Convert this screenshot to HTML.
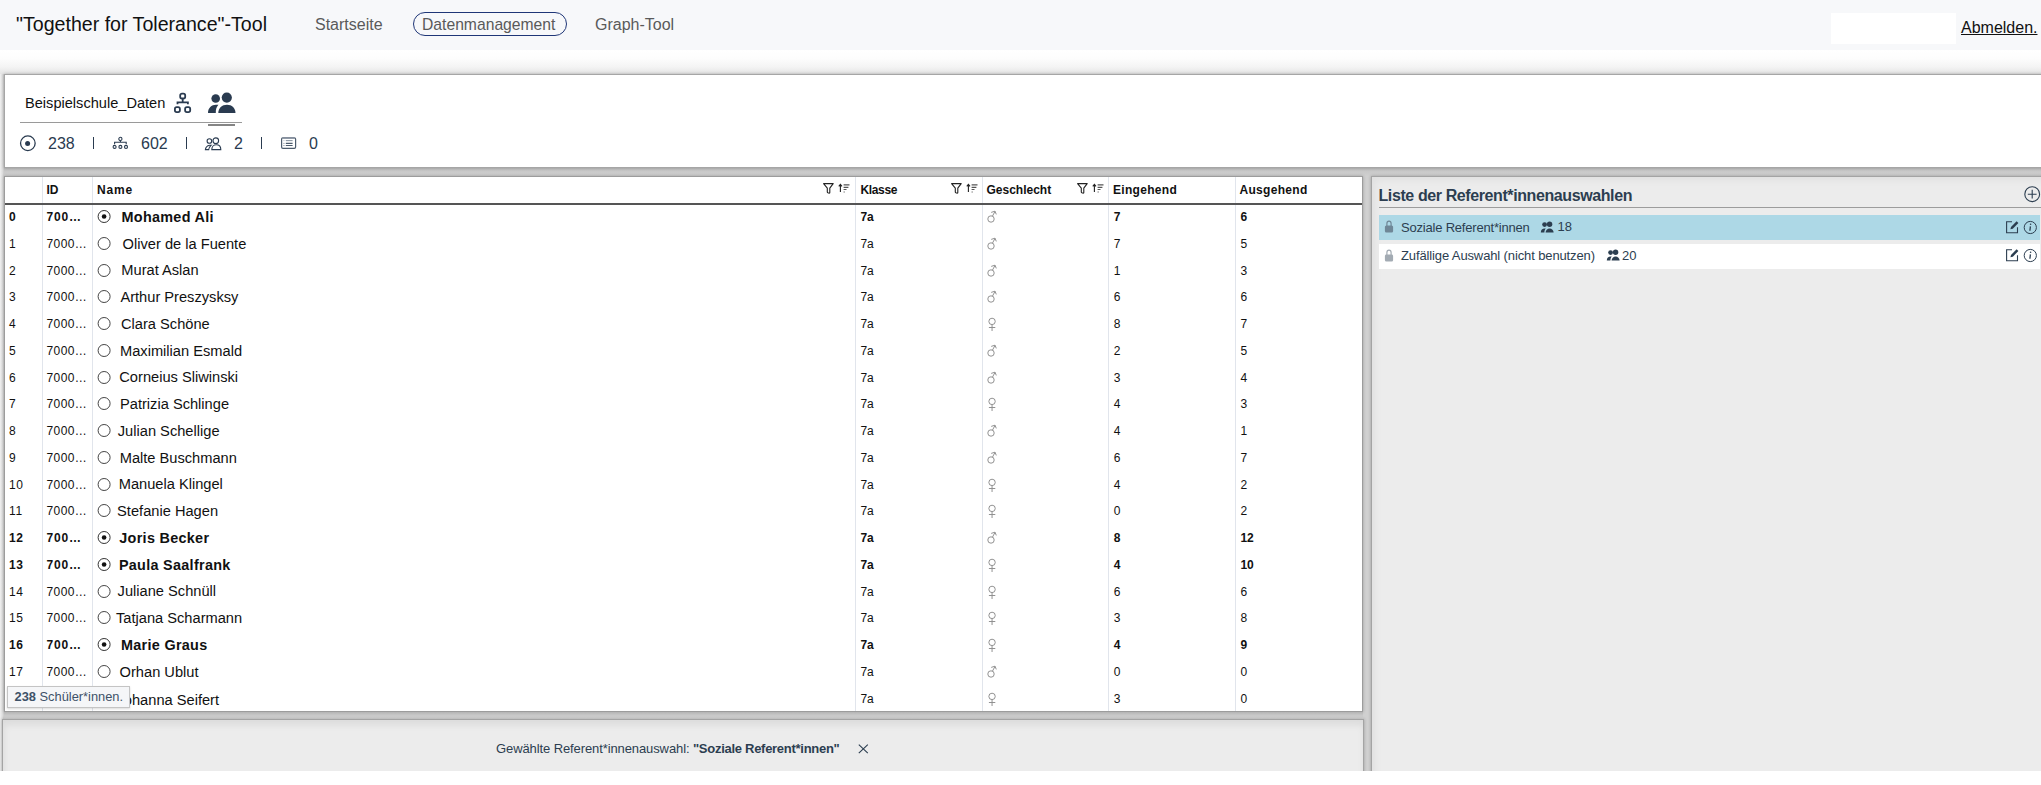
<!DOCTYPE html>
<html><head><meta charset="utf-8">
<style>
*{box-sizing:border-box;margin:0;padding:0}
html,body{width:2041px;height:785px;overflow:hidden;background:#fff;font-family:"Liberation Sans",sans-serif;}
.abs{position:absolute;white-space:nowrap}
#nav{position:absolute;left:0;top:0;width:2041px;height:50px;background:#f7f8fa}
#title{left:16px;top:12.5px;font-size:19.6px;color:#111;line-height:22px}
.nl{font-size:16px;color:#5a5a5a;line-height:18px;top:16px}
#pill{left:413px;top:12px;width:154px;height:24px;border:1.5px solid #1f3677;border-radius:12px}
#wbox{left:1831px;top:13px;width:125px;height:31px;background:#fff}
#abm{left:1961px;top:18.5px;font-size:16px;color:#111;text-decoration:underline;text-underline-offset:1.4px;line-height:18px}
#info{position:absolute;left:4px;top:74px;width:2060px;height:94px;background:#fff;border:1px solid #a6a6a6;box-shadow:0 0 3px rgba(0,0,0,0.25)}
#gray{position:absolute;left:0;top:167px;width:2041px;height:604px;background:linear-gradient(#bababa 0px,#c8c8c8 4px,#d0d0d0 9px,#d0d0d0 100%)}
#lstrip{position:absolute;left:0;top:74px;width:4px;height:697px;background:linear-gradient(90deg,#f0f0f0,#dadada 70%,#c8c8c8)}
#topgrad{position:absolute;left:0;top:50px;width:2041px;height:24px;background:linear-gradient(#fff 0%,#fdfdfd 35%,#f4f4f4 70%,#e4e4e4 100%)}
#table{position:absolute;left:4px;top:176px;width:1359px;height:536px;background:#fff;border:1px solid #9c9c9c;overflow:hidden;box-shadow:0 0 3px rgba(0,0,0,0.25)}
#bottom{position:absolute;left:2px;top:719px;width:1362px;height:60px;background:#ececec;border:1px solid #a4a4a4;box-shadow:0 0 3px rgba(0,0,0,0.25), inset 1px 5px 7px rgba(0,0,0,0.07)}
#right{position:absolute;left:1371px;top:176px;width:690px;height:610px;background:#ececec;border:1px solid #a4a4a4;box-shadow:0 0 3px rgba(0,0,0,0.25), inset 3px 3px 8px rgba(0,0,0,0.05)}
.st{top:135px;font-size:16px;color:#2a3b50;line-height:17px}
.stb{top:137.4px;width:1.6px;height:12px;background:#2a3b50}
#table div,#table svg{position:absolute;white-space:nowrap}
.cd{top:0;width:1px;height:535px;background:#e1e5ec}
.hb{left:0;top:26px;width:1358px;height:2px;background:#555}
.ht{top:6px;font-size:12px;font-weight:bold;color:#111;line-height:14px}
.ic{top:5px}
.tc{font-size:12px;color:#111;line-height:16px}
.idc{letter-spacing:0.4px}
.idc.b{letter-spacing:0.85px}
.b{font-weight:bold}
.nm.b{letter-spacing:0.3px;font-size:14.4px}
.nm{font-size:14.65px;color:#111;line-height:17px}
#rtitle{left:1378.5px;top:187px;font-size:16px;font-weight:bold;color:#2c3e50;letter-spacing:-0.4px;line-height:18px}
.rt{font-size:13px;color:#2c3e50;line-height:15px}
#tip{left:7px;top:686px;width:123px;height:22px;background:#f5f6f8;border:1px solid #c4c4c4;box-shadow:0 1px 2px rgba(0,0,0,0.15);font-size:12.85px;color:#3e5268;line-height:20px;padding-left:6.5px}
#white{position:absolute;left:0;top:771px;width:2041px;height:14px;background:#fff}
</style></head><body>
<div id="nav">
  <div class="abs" id="title">"Together for Tolerance"-Tool</div>
  <div class="abs nl" style="left:315px">Startseite</div>
  <div class="abs" id="pill"></div>
  <div class="abs nl" style="left:422px;font-size:15.7px">Datenmanagement</div>
  <div class="abs nl" style="left:595px">Graph-Tool</div>
  <div class="abs" id="wbox"></div>
  <div class="abs" id="abm">Abmelden.</div>
</div>
<div id="gray"></div><div id="topgrad"></div><div id="lstrip"></div><div id="info"></div>
<div class="abs" id="bsd" style="left:25px;top:95px;font-size:14.6px;color:#111;line-height:17px">Beispielschule_Daten</div>
<svg class="abs" style="left:172px;top:91px" width="22" height="24" viewBox="0 0 22 24">
 <g fill="none" stroke="#2a3b50" stroke-width="1.8">
  <rect x="8.2" y="2.6" width="5" height="4.9" rx="1.8"/>
  <path d="M10.7 7.5v3.7 M5.5 13.2v-1.8h10.4v1.8"/>
  <rect x="2.9" y="16.1" width="5" height="5" rx="1.8"/>
  <rect x="13.1" y="16.1" width="5.1" height="5" rx="1.8"/>
 </g>
</svg>
<svg class="abs" style="left:206px;top:90px" width="32" height="25" viewBox="0 0 32 25">
 <g fill="#2a3b50">
  <circle cx="9.7" cy="8.5" r="4.3"/>
  <circle cx="20.8" cy="7.6" r="5.1"/>
  <path d="M2 23 C2 18 5.5 14.8 10 14.8 L12.4 14.8 C10.6 16.8 9.6 19.6 9.8 23 Z"/>
  <path d="M12.3 23 C12.3 18.2 16 14.8 21 14.8 C25.8 14.8 29.5 18.2 29.5 23 Z"/>
 </g>
</svg>
<div class="abs" style="left:20px;top:122px;width:222px;height:1px;background:#9a9a9a"></div>
<div class="abs" style="left:208px;top:124px;width:27px;height:2px;background:#858585"></div>
<svg class="abs" style="left:19px;top:134px" width="18" height="18" viewBox="0 0 18 18">
 <circle cx="8.85" cy="9.25" r="7.3" fill="none" stroke="#2a3b50" stroke-width="1.3"/>
 <circle cx="8.6" cy="9.5" r="2.5" fill="#2a3b50"/>
</svg>
<div class="abs st" style="left:48px">238</div>
<div class="abs stb" style="left:92.6px"></div>
<svg class="abs" style="left:112px;top:136px" width="17" height="14" viewBox="0 0 17 14">
 <g fill="none" stroke="#2a3b50" stroke-width="1.1">
  <circle cx="8.4" cy="2.9" r="1.6"/>
  <path d="M8.4 4.5v1.6 M2.6 8.3V6.3h11.6v2"/>
  <circle cx="2.6" cy="10.9" r="1.5"/>
  <circle cx="8.4" cy="10.9" r="1.5"/>
  <circle cx="14" cy="10.9" r="1.5"/>
 </g>
</svg>
<div class="abs st" style="left:141px">602</div>
<div class="abs stb" style="left:185.6px"></div>
<svg class="abs" style="left:204px;top:136.5px" width="18" height="14" viewBox="0 0 18 14">
 <g fill="none" stroke="#2a3b50" stroke-width="1.1">
  <circle cx="5.4" cy="4" r="2.3"/>
  <circle cx="11.8" cy="3.7" r="2.8"/>
  <path d="M1.4 12.6C1.6 10.6 3 8.7 5.6 8.2H7.2C6 9.4 5 10.9 4.7 12.6Z"/>
  <path d="M7.8 12.6C7.8 9.7 9.7 7.8 12.3 7.8S16.8 9.7 16.8 12.6Z"/>
 </g>
</svg>
<div class="abs st" style="left:234px">2</div>
<div class="abs stb" style="left:260.8px"></div>
<svg class="abs" style="left:280px;top:136px" width="18" height="14" viewBox="0 0 18 14">
 <rect x="1.6" y="1.8" width="14" height="10.6" rx="1.3" fill="none" stroke="#4d5c6d" stroke-width="1.2"/>
 <path d="M2.2 2.1h12.8" stroke="#8d97a4" stroke-width="1.5"/>
 <path d="M5.8 4.6h6.8" stroke="#8d97a4" stroke-width="1.1"/>
 <path d="M5.8 7.4h6.8 M5.8 9.5h6.8" stroke="#4d5c6d" stroke-width="1.1"/>
 <path d="M3.5 4.6h.9" stroke="#b0b8c2" stroke-width="1"/>
 <path d="M3.5 7.4h.9 M3.5 9.5h.9" stroke="#6d7a88" stroke-width="1"/>
</svg>
<div class="abs st" style="left:309px">0</div>

<div id="table">
<div class="cd" style="left:37.0px"></div>
<div class="cd" style="left:87.0px"></div>
<div class="cd" style="left:850.0px"></div>
<div class="cd" style="left:977.0px"></div>
<div class="cd" style="left:1103.0px"></div>
<div class="cd" style="left:1230.0px"></div>
<div class="hb"></div>
<div class="ht" style="left:41.5px;letter-spacing:0px">ID</div>
<div class="ht" style="left:92.0px;letter-spacing:0.8px">Name</div>
<div class="ht" style="left:855.5px;letter-spacing:-0.35px">Klasse</div>
<div class="ht" style="left:981.5px;letter-spacing:0px">Geschlecht</div>
<div class="ht" style="left:1108.0px;letter-spacing:0.3px">Eingehend</div>
<div class="ht" style="left:1234.5px;letter-spacing:0.3px">Ausgehend</div>
<svg class="ic" style="left:817.3px" width="29" height="14" viewBox="0 0 29 14"><path d="M1.6 1.6H11.2L7.8 6.2V10.4C7.8 11 7.2 11.3 6.7 11.1L5.9 10.8C5.5 10.6 5.3 10.3 5.3 9.9V6.2Z" fill="none" stroke="#222" stroke-width="1.1" stroke-linejoin="round"/><path d="M18.4 10V2.6 M16.8 4.4l1.6-2 1.6 2" fill="none" stroke="#222" stroke-width="1.1"/><path d="M21.6 2.9h5.9 M21.6 5.4h4.8 M21.6 7.5h2.9 M21.6 10h1.1" stroke="#555" stroke-width="1.1"/></svg>
<svg class="ic" style="left:944.6px" width="29" height="14" viewBox="0 0 29 14"><path d="M1.6 1.6H11.2L7.8 6.2V10.4C7.8 11 7.2 11.3 6.7 11.1L5.9 10.8C5.5 10.6 5.3 10.3 5.3 9.9V6.2Z" fill="none" stroke="#222" stroke-width="1.1" stroke-linejoin="round"/><path d="M18.4 10V2.6 M16.8 4.4l1.6-2 1.6 2" fill="none" stroke="#222" stroke-width="1.1"/><path d="M21.6 2.9h5.9 M21.6 5.4h4.8 M21.6 7.5h2.9 M21.6 10h1.1" stroke="#555" stroke-width="1.1"/></svg>
<svg class="ic" style="left:1071.0px" width="29" height="14" viewBox="0 0 29 14"><path d="M1.6 1.6H11.2L7.8 6.2V10.4C7.8 11 7.2 11.3 6.7 11.1L5.9 10.8C5.5 10.6 5.3 10.3 5.3 9.9V6.2Z" fill="none" stroke="#222" stroke-width="1.1" stroke-linejoin="round"/><path d="M18.4 10V2.6 M16.8 4.4l1.6-2 1.6 2" fill="none" stroke="#222" stroke-width="1.1"/><path d="M21.6 2.9h5.9 M21.6 5.4h4.8 M21.6 7.5h2.9 M21.6 10h1.1" stroke="#555" stroke-width="1.1"/></svg>
<div class="tc b" style="left:4.1px;top:32.00px;letter-spacing:0.5px">0</div>
<div class="tc b idc" style="left:41.5px;top:32.00px">700…</div>
<svg class="rd" style="left:91.5px;top:32.00px" width="15" height="15" viewBox="0 0 15 15"><circle cx="7.1" cy="7.5" r="6" fill="none" stroke="#333" stroke-width="1"/><circle cx="7.1" cy="7.5" r="2.3" fill="#111"/></svg>
<div class="nm b" style="left:116.5px;top:31.80px">Mohamed Ali</div>
<div class="tc b" style="left:855.4px;top:32.00px">7a</div>
<svg class="gs" style="left:980.5px;top:33.00px" width="13" height="15" viewBox="0 0 13 15"><circle cx="5" cy="9" r="3.2" fill="none" stroke="#8c8c8c" stroke-width="0.95"/><path d="M6.4 6.2 9 1.5 M5.2 2.4 9 1.2 10.3 4.4" fill="none" stroke="#8c8c8c" stroke-width="0.95"/></svg>
<div class="tc b" style="left:1108.8px;top:32.00px">7</div>
<div class="tc b" style="left:1235.4px;top:32.00px">6</div>
<div class="tc" style="left:4.1px;top:58.75px;letter-spacing:0.5px">1</div>
<div class="tc idc" style="left:41.5px;top:58.75px">7000…</div>
<svg class="rd" style="left:91.5px;top:58.75px" width="15" height="15" viewBox="0 0 15 15"><circle cx="7.1" cy="7.5" r="6" fill="none" stroke="#444" stroke-width="1"/></svg>
<div class="nm" style="left:117.6px;top:58.55px">Oliver de la Fuente</div>
<div class="tc" style="left:855.4px;top:58.75px">7a</div>
<svg class="gs" style="left:980.5px;top:59.75px" width="13" height="15" viewBox="0 0 13 15"><circle cx="5" cy="9" r="3.2" fill="none" stroke="#8c8c8c" stroke-width="0.95"/><path d="M6.4 6.2 9 1.5 M5.2 2.4 9 1.2 10.3 4.4" fill="none" stroke="#8c8c8c" stroke-width="0.95"/></svg>
<div class="tc" style="left:1108.8px;top:58.75px">7</div>
<div class="tc" style="left:1235.4px;top:58.75px">5</div>
<div class="tc" style="left:4.1px;top:85.50px;letter-spacing:0.5px">2</div>
<div class="tc idc" style="left:41.5px;top:85.50px">7000…</div>
<svg class="rd" style="left:91.5px;top:85.50px" width="15" height="15" viewBox="0 0 15 15"><circle cx="7.1" cy="7.5" r="6" fill="none" stroke="#444" stroke-width="1"/></svg>
<div class="nm" style="left:116.3px;top:85.30px">Murat Aslan</div>
<div class="tc" style="left:855.4px;top:85.50px">7a</div>
<svg class="gs" style="left:980.5px;top:86.50px" width="13" height="15" viewBox="0 0 13 15"><circle cx="5" cy="9" r="3.2" fill="none" stroke="#8c8c8c" stroke-width="0.95"/><path d="M6.4 6.2 9 1.5 M5.2 2.4 9 1.2 10.3 4.4" fill="none" stroke="#8c8c8c" stroke-width="0.95"/></svg>
<div class="tc" style="left:1108.8px;top:85.50px">1</div>
<div class="tc" style="left:1235.4px;top:85.50px">3</div>
<div class="tc" style="left:4.1px;top:112.25px;letter-spacing:0.5px">3</div>
<div class="tc idc" style="left:41.5px;top:112.25px">7000…</div>
<svg class="rd" style="left:91.5px;top:112.25px" width="15" height="15" viewBox="0 0 15 15"><circle cx="7.1" cy="7.5" r="6" fill="none" stroke="#444" stroke-width="1"/></svg>
<div class="nm" style="left:115.4px;top:112.05px">Arthur Preszysksy</div>
<div class="tc" style="left:855.4px;top:112.25px">7a</div>
<svg class="gs" style="left:980.5px;top:113.25px" width="13" height="15" viewBox="0 0 13 15"><circle cx="5" cy="9" r="3.2" fill="none" stroke="#8c8c8c" stroke-width="0.95"/><path d="M6.4 6.2 9 1.5 M5.2 2.4 9 1.2 10.3 4.4" fill="none" stroke="#8c8c8c" stroke-width="0.95"/></svg>
<div class="tc" style="left:1108.8px;top:112.25px">6</div>
<div class="tc" style="left:1235.4px;top:112.25px">6</div>
<div class="tc" style="left:4.1px;top:139.00px;letter-spacing:0.5px">4</div>
<div class="tc idc" style="left:41.5px;top:139.00px">7000…</div>
<svg class="rd" style="left:91.5px;top:139.00px" width="15" height="15" viewBox="0 0 15 15"><circle cx="7.1" cy="7.5" r="6" fill="none" stroke="#444" stroke-width="1"/></svg>
<div class="nm" style="left:116.0px;top:138.80px">Clara Schöne</div>
<div class="tc" style="left:855.4px;top:139.00px">7a</div>
<svg class="gs" style="left:980.5px;top:140.00px" width="13" height="15" viewBox="0 0 13 15"><circle cx="6.05" cy="4.4" r="3.2" fill="none" stroke="#8c8c8c" stroke-width="0.95"/><path d="M6.05 7.6v6.4 M2.9 10.5h6.4" fill="none" stroke="#8c8c8c" stroke-width="0.95"/></svg>
<div class="tc" style="left:1108.8px;top:139.00px">8</div>
<div class="tc" style="left:1235.4px;top:139.00px">7</div>
<div class="tc" style="left:4.1px;top:165.75px;letter-spacing:0.5px">5</div>
<div class="tc idc" style="left:41.5px;top:165.75px">7000…</div>
<svg class="rd" style="left:91.5px;top:165.75px" width="15" height="15" viewBox="0 0 15 15"><circle cx="7.1" cy="7.5" r="6" fill="none" stroke="#444" stroke-width="1"/></svg>
<div class="nm" style="left:115.0px;top:165.55px">Maximilian Esmald</div>
<div class="tc" style="left:855.4px;top:165.75px">7a</div>
<svg class="gs" style="left:980.5px;top:166.75px" width="13" height="15" viewBox="0 0 13 15"><circle cx="5" cy="9" r="3.2" fill="none" stroke="#8c8c8c" stroke-width="0.95"/><path d="M6.4 6.2 9 1.5 M5.2 2.4 9 1.2 10.3 4.4" fill="none" stroke="#8c8c8c" stroke-width="0.95"/></svg>
<div class="tc" style="left:1108.8px;top:165.75px">2</div>
<div class="tc" style="left:1235.4px;top:165.75px">5</div>
<div class="tc" style="left:4.1px;top:192.50px;letter-spacing:0.5px">6</div>
<div class="tc idc" style="left:41.5px;top:192.50px">7000…</div>
<svg class="rd" style="left:91.5px;top:192.50px" width="15" height="15" viewBox="0 0 15 15"><circle cx="7.1" cy="7.5" r="6" fill="none" stroke="#444" stroke-width="1"/></svg>
<div class="nm" style="left:114.3px;top:192.30px">Corneius Sliwinski</div>
<div class="tc" style="left:855.4px;top:192.50px">7a</div>
<svg class="gs" style="left:980.5px;top:193.50px" width="13" height="15" viewBox="0 0 13 15"><circle cx="5" cy="9" r="3.2" fill="none" stroke="#8c8c8c" stroke-width="0.95"/><path d="M6.4 6.2 9 1.5 M5.2 2.4 9 1.2 10.3 4.4" fill="none" stroke="#8c8c8c" stroke-width="0.95"/></svg>
<div class="tc" style="left:1108.8px;top:192.50px">3</div>
<div class="tc" style="left:1235.4px;top:192.50px">4</div>
<div class="tc" style="left:4.1px;top:219.25px;letter-spacing:0.5px">7</div>
<div class="tc idc" style="left:41.5px;top:219.25px">7000…</div>
<svg class="rd" style="left:91.5px;top:219.25px" width="15" height="15" viewBox="0 0 15 15"><circle cx="7.1" cy="7.5" r="6" fill="none" stroke="#444" stroke-width="1"/></svg>
<div class="nm" style="left:115.0px;top:219.05px">Patrizia Schlinge</div>
<div class="tc" style="left:855.4px;top:219.25px">7a</div>
<svg class="gs" style="left:980.5px;top:220.25px" width="13" height="15" viewBox="0 0 13 15"><circle cx="6.05" cy="4.4" r="3.2" fill="none" stroke="#8c8c8c" stroke-width="0.95"/><path d="M6.05 7.6v6.4 M2.9 10.5h6.4" fill="none" stroke="#8c8c8c" stroke-width="0.95"/></svg>
<div class="tc" style="left:1108.8px;top:219.25px">4</div>
<div class="tc" style="left:1235.4px;top:219.25px">3</div>
<div class="tc" style="left:4.1px;top:246.00px;letter-spacing:0.5px">8</div>
<div class="tc idc" style="left:41.5px;top:246.00px">7000…</div>
<svg class="rd" style="left:91.5px;top:246.00px" width="15" height="15" viewBox="0 0 15 15"><circle cx="7.1" cy="7.5" r="6" fill="none" stroke="#444" stroke-width="1"/></svg>
<div class="nm" style="left:112.8px;top:245.80px">Julian Schellige</div>
<div class="tc" style="left:855.4px;top:246.00px">7a</div>
<svg class="gs" style="left:980.5px;top:247.00px" width="13" height="15" viewBox="0 0 13 15"><circle cx="5" cy="9" r="3.2" fill="none" stroke="#8c8c8c" stroke-width="0.95"/><path d="M6.4 6.2 9 1.5 M5.2 2.4 9 1.2 10.3 4.4" fill="none" stroke="#8c8c8c" stroke-width="0.95"/></svg>
<div class="tc" style="left:1108.8px;top:246.00px">4</div>
<div class="tc" style="left:1235.4px;top:246.00px">1</div>
<div class="tc" style="left:4.1px;top:272.75px;letter-spacing:0.5px">9</div>
<div class="tc idc" style="left:41.5px;top:272.75px">7000…</div>
<svg class="rd" style="left:91.5px;top:272.75px" width="15" height="15" viewBox="0 0 15 15"><circle cx="7.1" cy="7.5" r="6" fill="none" stroke="#444" stroke-width="1"/></svg>
<div class="nm" style="left:114.7px;top:272.55px">Malte Buschmann</div>
<div class="tc" style="left:855.4px;top:272.75px">7a</div>
<svg class="gs" style="left:980.5px;top:273.75px" width="13" height="15" viewBox="0 0 13 15"><circle cx="5" cy="9" r="3.2" fill="none" stroke="#8c8c8c" stroke-width="0.95"/><path d="M6.4 6.2 9 1.5 M5.2 2.4 9 1.2 10.3 4.4" fill="none" stroke="#8c8c8c" stroke-width="0.95"/></svg>
<div class="tc" style="left:1108.8px;top:272.75px">6</div>
<div class="tc" style="left:1235.4px;top:272.75px">7</div>
<div class="tc" style="left:4.1px;top:299.50px;letter-spacing:0.5px">10</div>
<div class="tc idc" style="left:41.5px;top:299.50px">7000…</div>
<svg class="rd" style="left:91.5px;top:299.50px" width="15" height="15" viewBox="0 0 15 15"><circle cx="7.1" cy="7.5" r="6" fill="none" stroke="#444" stroke-width="1"/></svg>
<div class="nm" style="left:113.7px;top:299.30px">Manuela Klingel</div>
<div class="tc" style="left:855.4px;top:299.50px">7a</div>
<svg class="gs" style="left:980.5px;top:300.50px" width="13" height="15" viewBox="0 0 13 15"><circle cx="6.05" cy="4.4" r="3.2" fill="none" stroke="#8c8c8c" stroke-width="0.95"/><path d="M6.05 7.6v6.4 M2.9 10.5h6.4" fill="none" stroke="#8c8c8c" stroke-width="0.95"/></svg>
<div class="tc" style="left:1108.8px;top:299.50px">4</div>
<div class="tc" style="left:1235.4px;top:299.50px">2</div>
<div class="tc" style="left:4.1px;top:326.25px;letter-spacing:0.5px">11</div>
<div class="tc idc" style="left:41.5px;top:326.25px">7000…</div>
<svg class="rd" style="left:91.5px;top:326.25px" width="15" height="15" viewBox="0 0 15 15"><circle cx="7.1" cy="7.5" r="6" fill="none" stroke="#444" stroke-width="1"/></svg>
<div class="nm" style="left:112.1px;top:326.05px">Stefanie Hagen</div>
<div class="tc" style="left:855.4px;top:326.25px">7a</div>
<svg class="gs" style="left:980.5px;top:327.25px" width="13" height="15" viewBox="0 0 13 15"><circle cx="6.05" cy="4.4" r="3.2" fill="none" stroke="#8c8c8c" stroke-width="0.95"/><path d="M6.05 7.6v6.4 M2.9 10.5h6.4" fill="none" stroke="#8c8c8c" stroke-width="0.95"/></svg>
<div class="tc" style="left:1108.8px;top:326.25px">0</div>
<div class="tc" style="left:1235.4px;top:326.25px">2</div>
<div class="tc b" style="left:4.1px;top:353.00px;letter-spacing:0.5px">12</div>
<div class="tc b idc" style="left:41.5px;top:353.00px">700…</div>
<svg class="rd" style="left:91.5px;top:353.00px" width="15" height="15" viewBox="0 0 15 15"><circle cx="7.1" cy="7.5" r="6" fill="none" stroke="#333" stroke-width="1"/><circle cx="7.1" cy="7.5" r="2.3" fill="#111"/></svg>
<div class="nm b" style="left:114.3px;top:352.80px">Joris Becker</div>
<div class="tc b" style="left:855.4px;top:353.00px">7a</div>
<svg class="gs" style="left:980.5px;top:354.00px" width="13" height="15" viewBox="0 0 13 15"><circle cx="5" cy="9" r="3.2" fill="none" stroke="#8c8c8c" stroke-width="0.95"/><path d="M6.4 6.2 9 1.5 M5.2 2.4 9 1.2 10.3 4.4" fill="none" stroke="#8c8c8c" stroke-width="0.95"/></svg>
<div class="tc b" style="left:1108.8px;top:353.00px">8</div>
<div class="tc b" style="left:1235.4px;top:353.00px">12</div>
<div class="tc b" style="left:4.1px;top:379.75px;letter-spacing:0.5px">13</div>
<div class="tc b idc" style="left:41.5px;top:379.75px">700…</div>
<svg class="rd" style="left:91.5px;top:379.75px" width="15" height="15" viewBox="0 0 15 15"><circle cx="7.1" cy="7.5" r="6" fill="none" stroke="#333" stroke-width="1"/><circle cx="7.1" cy="7.5" r="2.3" fill="#111"/></svg>
<div class="nm b" style="left:113.9px;top:379.55px">Paula Saalfrank</div>
<div class="tc b" style="left:855.4px;top:379.75px">7a</div>
<svg class="gs" style="left:980.5px;top:380.75px" width="13" height="15" viewBox="0 0 13 15"><circle cx="6.05" cy="4.4" r="3.2" fill="none" stroke="#8c8c8c" stroke-width="0.95"/><path d="M6.05 7.6v6.4 M2.9 10.5h6.4" fill="none" stroke="#8c8c8c" stroke-width="0.95"/></svg>
<div class="tc b" style="left:1108.8px;top:379.75px">4</div>
<div class="tc b" style="left:1235.4px;top:379.75px">10</div>
<div class="tc" style="left:4.1px;top:406.50px;letter-spacing:0.5px">14</div>
<div class="tc idc" style="left:41.5px;top:406.50px">7000…</div>
<svg class="rd" style="left:91.5px;top:406.50px" width="15" height="15" viewBox="0 0 15 15"><circle cx="7.1" cy="7.5" r="6" fill="none" stroke="#444" stroke-width="1"/></svg>
<div class="nm" style="left:112.6px;top:406.30px">Juliane Schnüll</div>
<div class="tc" style="left:855.4px;top:406.50px">7a</div>
<svg class="gs" style="left:980.5px;top:407.50px" width="13" height="15" viewBox="0 0 13 15"><circle cx="6.05" cy="4.4" r="3.2" fill="none" stroke="#8c8c8c" stroke-width="0.95"/><path d="M6.05 7.6v6.4 M2.9 10.5h6.4" fill="none" stroke="#8c8c8c" stroke-width="0.95"/></svg>
<div class="tc" style="left:1108.8px;top:406.50px">6</div>
<div class="tc" style="left:1235.4px;top:406.50px">6</div>
<div class="tc" style="left:4.1px;top:433.25px;letter-spacing:0.5px">15</div>
<div class="tc idc" style="left:41.5px;top:433.25px">7000…</div>
<svg class="rd" style="left:91.5px;top:433.25px" width="15" height="15" viewBox="0 0 15 15"><circle cx="7.1" cy="7.5" r="6" fill="none" stroke="#444" stroke-width="1"/></svg>
<div class="nm" style="left:111.0px;top:433.05px">Tatjana Scharmann</div>
<div class="tc" style="left:855.4px;top:433.25px">7a</div>
<svg class="gs" style="left:980.5px;top:434.25px" width="13" height="15" viewBox="0 0 13 15"><circle cx="6.05" cy="4.4" r="3.2" fill="none" stroke="#8c8c8c" stroke-width="0.95"/><path d="M6.05 7.6v6.4 M2.9 10.5h6.4" fill="none" stroke="#8c8c8c" stroke-width="0.95"/></svg>
<div class="tc" style="left:1108.8px;top:433.25px">3</div>
<div class="tc" style="left:1235.4px;top:433.25px">8</div>
<div class="tc b" style="left:4.1px;top:460.00px;letter-spacing:0.5px">16</div>
<div class="tc b idc" style="left:41.5px;top:460.00px">700…</div>
<svg class="rd" style="left:91.5px;top:460.00px" width="15" height="15" viewBox="0 0 15 15"><circle cx="7.1" cy="7.5" r="6" fill="none" stroke="#333" stroke-width="1"/><circle cx="7.1" cy="7.5" r="2.3" fill="#111"/></svg>
<div class="nm b" style="left:116.0px;top:459.80px">Marie Graus</div>
<div class="tc b" style="left:855.4px;top:460.00px">7a</div>
<svg class="gs" style="left:980.5px;top:461.00px" width="13" height="15" viewBox="0 0 13 15"><circle cx="6.05" cy="4.4" r="3.2" fill="none" stroke="#8c8c8c" stroke-width="0.95"/><path d="M6.05 7.6v6.4 M2.9 10.5h6.4" fill="none" stroke="#8c8c8c" stroke-width="0.95"/></svg>
<div class="tc b" style="left:1108.8px;top:460.00px">4</div>
<div class="tc b" style="left:1235.4px;top:460.00px">9</div>
<div class="tc" style="left:4.1px;top:486.75px;letter-spacing:0.5px">17</div>
<div class="tc idc" style="left:41.5px;top:486.75px">7000…</div>
<svg class="rd" style="left:91.5px;top:486.75px" width="15" height="15" viewBox="0 0 15 15"><circle cx="7.1" cy="7.5" r="6" fill="none" stroke="#444" stroke-width="1"/></svg>
<div class="nm" style="left:114.6px;top:486.55px">Orhan Ublut</div>
<div class="tc" style="left:855.4px;top:486.75px">7a</div>
<svg class="gs" style="left:980.5px;top:487.75px" width="13" height="15" viewBox="0 0 13 15"><circle cx="5" cy="9" r="3.2" fill="none" stroke="#8c8c8c" stroke-width="0.95"/><path d="M6.4 6.2 9 1.5 M5.2 2.4 9 1.2 10.3 4.4" fill="none" stroke="#8c8c8c" stroke-width="0.95"/></svg>
<div class="tc" style="left:1108.8px;top:486.75px">0</div>
<div class="tc" style="left:1235.4px;top:486.75px">0</div>
<div class="tc" style="left:4.1px;top:513.50px;letter-spacing:0.5px">18</div>
<div class="tc idc" style="left:41.5px;top:513.50px">7000…</div>
<svg class="rd" style="left:91.5px;top:513.50px" width="15" height="15" viewBox="0 0 15 15"><circle cx="7.1" cy="7.5" r="6" fill="none" stroke="#444" stroke-width="1"/></svg>
<div class="nm" style="left:111.5px;top:515.30px">Johanna Seifert</div>
<div class="tc" style="left:855.4px;top:513.50px">7a</div>
<svg class="gs" style="left:980.5px;top:514.50px" width="13" height="15" viewBox="0 0 13 15"><circle cx="6.05" cy="4.4" r="3.2" fill="none" stroke="#8c8c8c" stroke-width="0.95"/><path d="M6.05 7.6v6.4 M2.9 10.5h6.4" fill="none" stroke="#8c8c8c" stroke-width="0.95"/></svg>
<div class="tc" style="left:1108.8px;top:513.50px">3</div>
<div class="tc" style="left:1235.4px;top:513.50px">0</div>
</div><!--/table-->
<div class="abs" style="left:4px;top:712px;width:1359px;height:7px;background:linear-gradient(#b4b4b4,#c6c6c6 40%,#d6d6d6)"></div>
<div id="bottom"></div>
<div class="abs" style="left:496px;top:741px;font-size:13px;color:#2c3e50;line-height:15px;letter-spacing:-0.1px">Gewählte Referent*innenauswahl: <b style="letter-spacing:-0.28px">"Soziale Referent*innen"</b></div>
<svg class="abs" style="left:857px;top:743px" width="13" height="12" viewBox="0 0 13 12"><path d="M1.8 1.6l9 8.6 M10.8 1.6l-9 8.6" stroke="#2c3e50" stroke-width="1.1"/></svg>
<div class="abs" id="tip"><b>238</b> Schüler*innen.</div>

<div id="right"></div><div id="white"></div>
<div class="abs" id="rtitle">Liste der Referent*innenauswahlen</div>
<svg class="abs" style="left:2023px;top:185px" width="18" height="18" viewBox="0 0 18 18"><circle cx="9.2" cy="9.2" r="7.4" fill="none" stroke="#2c3e50" stroke-width="1.1"/><path d="M9.2 4.8v8.8 M4.8 9.2h8.8" stroke="#2c3e50" stroke-width="1.1"/></svg>
<div class="abs" style="left:1379px;top:207px;width:662px;height:1px;background:#9c9c9c"></div>
<div class="abs" style="left:1379px;top:215px;width:661px;height:25px;background:#add8e6"></div>
<div class="abs" style="left:1379px;top:243.5px;width:661px;height:25px;background:#fff"></div>
<svg class="abs" style="left:1383px;top:219px" width="12" height="15" viewBox="0 0 12 15"><path d="M3.9 7V4.4C3.9 2.9 4.7 2.1 6 2.1S8.1 2.9 8.1 4.4V7" fill="none" stroke="#6f8797" stroke-width="1.2"/><rect x="1.9" y="6.6" width="8.2" height="7" rx="1.5" fill="#6f8797"/></svg>
<svg class="abs" style="left:1383px;top:247.5px" width="12" height="15" viewBox="0 0 12 15"><path d="M3.9 7V4.4C3.9 2.9 4.7 2.1 6 2.1S8.1 2.9 8.1 4.4V7" fill="none" stroke="#a3abb3" stroke-width="1.2"/><rect x="1.9" y="6.6" width="8.2" height="7" rx="1.5" fill="#a3abb3"/></svg>
<div class="abs rt" style="left:1401px;top:219.5px;letter-spacing:-0.2px">Soziale Referent*innen</div>
<div class="abs rt" style="left:1401px;top:248px;letter-spacing:-0.12px">Zufällige Auswahl (nicht benutzen)</div>
<svg class="abs" style="left:1540px;top:220.5px" width="15" height="13" viewBox="0 0 15 13"><g fill="#2c3e50"><circle cx="4.6" cy="3.6" r="2.4"/><circle cx="9.6" cy="3.3" r="2.7"/><path d="M0.8 11.6C0.8 9 2.4 7.6 4.6 7.6h1.2C4.9 8.7 4.4 10 4.4 11.6Z"/><path d="M5.6 11.6C5.6 9 7.4 7.4 9.6 7.4S13.6 9 13.6 11.6Z"/></g></svg>
<div class="abs rt" style="left:1557.5px;top:219px">18</div>
<svg class="abs" style="left:1606px;top:249px" width="15" height="13" viewBox="0 0 15 13"><g fill="#2c3e50"><circle cx="4.6" cy="3.6" r="2.4"/><circle cx="9.6" cy="3.3" r="2.7"/><path d="M0.8 11.6C0.8 9 2.4 7.6 4.6 7.6h1.2C4.9 8.7 4.4 10 4.4 11.6Z"/><path d="M5.6 11.6C5.6 9 7.4 7.4 9.6 7.4S13.6 9 13.6 11.6Z"/></g></svg>
<div class="abs rt" style="left:1622px;top:247.5px">20</div>
<svg class="abs" style="left:2005px;top:220px" width="15" height="14" viewBox="0 0 15 14"><path d="M7 1.8H1.6v10.9h10.9V7.2" fill="none" stroke="#2c3e50" stroke-width="1.1"/><path d="M5.4 9.3l.6-2.4L11.6 1.3l1.8 1.8-5.6 5.6Z" fill="#2c3e50"/></svg>
<svg class="abs" style="left:2023px;top:219.5px" width="15" height="15" viewBox="0 0 15 15"><circle cx="7.3" cy="7.5" r="6.1" fill="none" stroke="#2c3e50" stroke-width="1"/><circle cx="7.6" cy="4.2" r="0.8" fill="#2c3e50"/><path d="M7.4 6.4 6.9 10.8" stroke="#2c3e50" stroke-width="1.3"/></svg>
<svg class="abs" style="left:2005px;top:248px" width="15" height="14" viewBox="0 0 15 14"><path d="M7 1.8H1.6v10.9h10.9V7.2" fill="none" stroke="#2c3e50" stroke-width="1.1"/><path d="M5.4 9.3l.6-2.4L11.6 1.3l1.8 1.8-5.6 5.6Z" fill="#2c3e50"/></svg>
<svg class="abs" style="left:2023px;top:247.5px" width="15" height="15" viewBox="0 0 15 15"><circle cx="7.3" cy="7.5" r="6.1" fill="none" stroke="#2c3e50" stroke-width="1"/><circle cx="7.6" cy="4.2" r="0.8" fill="#2c3e50"/><path d="M7.4 6.4 6.9 10.8" stroke="#2c3e50" stroke-width="1.3"/></svg>

</body></html>
